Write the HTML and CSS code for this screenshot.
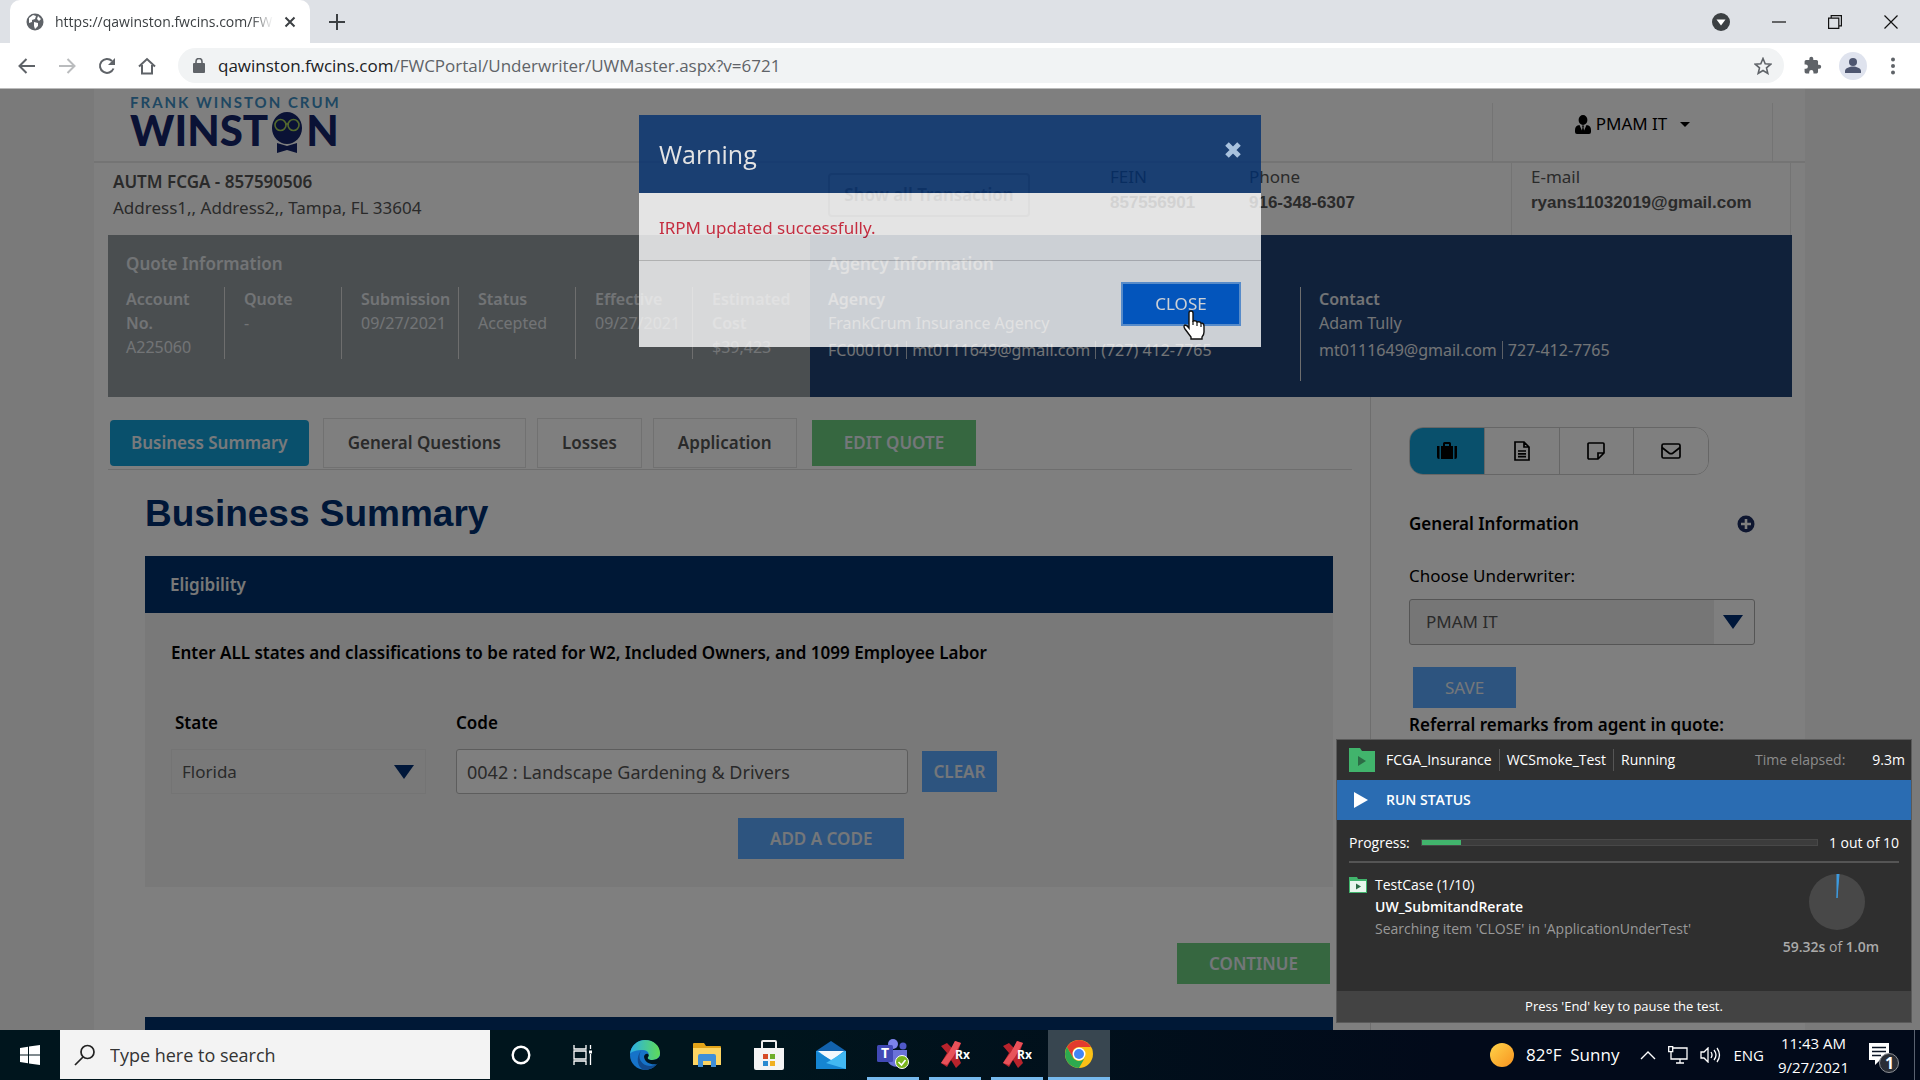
FILE: index.html
```html
<!DOCTYPE html>
<html lang="en">
<head>
<meta charset="utf-8">
<title>Underwriter - Business Summary</title>
<link rel="stylesheet" href="styles.css">
</head>
<body>
<header class="browser">
  <div class="tabstrip">
    <div class="browser-tab">
      <svg width="18" height="18" viewBox="0 0 18 18"><circle cx="9" cy="9" r="8.500" fill="#5f6368"/><path d="M3 5l4-3 3 1-1 3-3 1 0 2-3 1zM8 9l4 1 0 3-3 3-1-3zM12 3l3 3-2 2-2-2z" fill="#fff"/></svg>
      <span class="browser-tab-title">https://qawinston.fwcins.com/FW</span>
      <button class="icon-btn" aria-label="Close tab"><svg width="12" height="12" viewBox="0 0 12 12"><path d="M1.500 1.500l9 9M10.500 1.500l-9 9" stroke="#3c4043" stroke-width="2"/></svg></button>
    </div>
    <button class="icon-btn new-tab" aria-label="New tab"><svg width="16" height="16" viewBox="0 0 16 16"><path d="M8 0v16M0 8h16" stroke="#3c4043" stroke-width="2"/></svg></button>
    <div class="window-controls">
      <svg width="18" height="18" viewBox="0 0 18 18"><circle cx="9" cy="9" r="9" fill="#3c4043"/><path d="M4.500 6.500h9L9 12.500z" fill="#fff"/></svg>
      <svg width="14" height="14" viewBox="0 0 14 14"><path d="M0 7h14" stroke="#111" stroke-width="1.200"/></svg>
      <svg width="14" height="14" viewBox="0 0 14 14"><path d="M.6 3.200h10.200v10.200H.6zM3.200 3V.6h10.200v10.200H11" fill="none" stroke="#111" stroke-width="1.200"/></svg>
      <svg width="14" height="14" viewBox="0 0 14 14"><path d="M.5.5l13 13M13.500.5l-13 13" stroke="#111" stroke-width="1.200"/></svg>
    </div>
  </div>
  <div class="toolbar">
    <button class="icon-btn" aria-label="Back"><svg width="18" height="16" viewBox="0 0 18 16"><path d="M17 8H2M8.500 1L1.500 8l7 7" fill="none" stroke="#5f6368" stroke-width="2"/></svg></button>
    <button class="icon-btn" aria-label="Forward"><svg width="18" height="16" viewBox="0 0 18 16"><path d="M1 8h15M9.500 1l7 7-7 7" fill="none" stroke="#babcbe" stroke-width="2"/></svg></button>
    <button class="icon-btn" aria-label="Reload"><svg width="18" height="18" viewBox="0 0 18 18"><path d="M15.500 11.500A7 7 0 1 1 14 4" fill="none" stroke="#5f6368" stroke-width="2"/><path d="M17 1v7h-7z" fill="#5f6368"/></svg></button>
    <button class="icon-btn" aria-label="Home"><svg width="18" height="18" viewBox="0 0 18 18"><path d="M1 9.500L9 2l8 7.500M4 8v8.500h10V8" fill="none" stroke="#5f6368" stroke-width="2"/></svg></button>
    <div class="address">
      <svg width="12" height="15" viewBox="0 0 12 15"><rect y="5" width="12" height="10" rx="1" fill="#5f6368"/><path d="M3 6V3.500a3 3 0 0 1 6 0V6" fill="none" stroke="#5f6368" stroke-width="1.600"/></svg>
      <span class="url"><b>qawinston.fwcins.com</b>/FWCPortal/Underwriter/UWMaster.aspx?v=6721</span>
      <svg width="18" height="18" viewBox="0 0 18 18"><path d="M9 1.500l2.200 5.200 5.600.5-4.300 3.700 1.300 5.500L9 13.500l-4.800 2.900 1.300-5.500L1.200 7.200l5.600-.5z" fill="none" stroke="#5f6368" stroke-width="1.600"/></svg>
    </div>
    <svg width="19" height="19" viewBox="0 0 24 24"><path fill="#5f6368" d="M20.500 11H19V7a2 2 0 0 0-2-2h-4V3.500a2.500 2.500 0 0 0-5 0V5H4a2 2 0 0 0-2 2v3.800h1.500a2.700 2.700 0 0 1 0 5.400H2V20a2 2 0 0 0 2 2h3.800v-1.500a2.700 2.700 0 0 1 5.400 0V22H17a2 2 0 0 0 2-2v-4h1.500a2.500 2.500 0 0 0 0-5z"/></svg>
    <svg width="28" height="28" viewBox="0 0 28 28"><circle cx="14" cy="14" r="14" fill="#dfe3ee"/><circle cx="14" cy="10" r="4" fill="#4e5670"/><path d="M6 21v-2c0-3 5-4.500 8-4.500s8 1.500 8 4.500v2z" fill="#4e5670"/></svg>
    <svg width="18" height="18" viewBox="0 0 18 18" fill="#5f6368"><circle cx="9" cy="2.500" r="2"/><circle cx="9" cy="9" r="2"/><circle cx="9" cy="15.500" r="2"/></svg>
  </div>
</header>

<main class="viewport">
  <div class="site">
    <div class="site-head">
      <a class="logo" href="#" aria-label="Frank Winston Crum Winston">
        <span class="logo-top">FRANK WINSTON CRUM</span>
        <span class="logo-main"><span>WINST</span><svg width="32" height="42" viewBox="0 0 32 42"><ellipse cx="16" cy="17" rx="15" ry="16" fill="#14256a"/><circle cx="9.500" cy="14" r="5.500" fill="#14256a" stroke="#a6d15a" stroke-width="1.600"/><circle cx="22.500" cy="14" r="5.500" fill="#14256a" stroke="#a6d15a" stroke-width="1.600"/><path d="M14 13h4" stroke="#a6d15a" stroke-width="1.600"/><path d="M6 32l10 3 10-3v10l-10-3-10 3z" fill="#14256a"/></svg><span>N</span></span>
      </a>
      <div class="user-menu">
        <button class="user-btn"><svg width="16" height="19" viewBox="0 0 16 19"><path d="M8 0a4.400 5 0 0 1 0 10A4.400 5 0 0 1 8 0zM4.500 10L8 18l3.500-8c3 .5 4.500 2 4.500 5v2q0 2-2 2H2q-2 0-2-2v-2c0-3 1.500-4.500 4.500-5zM7 10.500h2l-.5 2 .8 4L8 18l-1.300-1.500.8-4z" fill="#000"/></svg>PMAM IT<i class="caret"></i></button>
      </div>
    </div>

    <div class="insured">
      <div class="insured-cell"><strong>AUTM FCGA - 857590506</strong><span>Address1,, Address2,, Tampa, FL 33604</span></div>
      <div><button class="outline-btn">Show all Transaction</button></div>
      <div class="contact-cell"><span>FEIN</span><b>857556901</b></div>
      <div class="contact-cell"><span>Phone</span><b>916-348-6307</b></div>
      <div class="contact-cell email-cell"><span>E-mail</span><b>ryans11032019@gmail.com</b></div>
    </div>

    <div class="band">
      <section class="quote-info">
        <h2>Quote Information</h2>
        <dl class="quote-cells">
          <div><dt>Account No.</dt><dd>A225060</dd></div>
          <div><dt>Quote</dt><dd>-</dd></div>
          <div><dt>Submission</dt><dd>09/27/2021</dd></div>
          <div><dt>Status</dt><dd>Accepted</dd></div>
          <div><dt>Effective</dt><dd>09/27/2021</dd></div>
          <div><dt>Estimated Cost</dt><dd>$39,423</dd></div>
        </dl>
      </section>
      <section class="agency-info">
        <h2>Agency Information</h2>
        <dl class="agency-cells">
          <div><dt>Agency</dt><dd>FrankCrum Insurance Agency</dd><dd class="reach"><span>FC000101</span><span>mt0111649@gmail.com</span><span>(727) 412-7765</span></dd></div>
          <div><dt>Contact</dt><dd>Adam Tully</dd><dd class="reach"><span>mt0111649@gmail.com</span><span>727-412-7765</span></dd></div>
        </dl>
      </section>
    </div>

    <div class="columns">
      <div class="main-col">
        <nav class="tabs">
          <a class="tab active" href="#">Business Summary</a>
          <a class="tab" href="#">General Questions</a>
          <a class="tab" href="#">Losses</a>
          <a class="tab" href="#">Application</a>
          <button class="btn green edit">EDIT QUOTE</button>
        </nav>
        <div class="main-body">
          <h1>Business Summary</h1>
          <h3 class="section-bar">Eligibility</h3>
          <form class="section-body">
            <p class="lead">Enter ALL states and classifications to be rated for W2, Included Owners, and 1099 Employee Labor</p>
            <div class="fields">
              <div class="field"><label for="state">State</label>
                <div class="select-wrap plain"><select id="state"><option>Florida</option></select><i class="arrow"></i></div></div>
              <div class="field"><label for="code">Code</label>
                <input id="code" type="text" value="0042 : Landscape Gardening &amp; Drivers"></div>
              <button class="btn blue clear" type="button">CLEAR</button>
            </div>
            <div class="add-row"><button class="btn blue" type="button">ADD A CODE</button></div>
          </form>
          <div class="continue-row"><button class="btn green">CONTINUE</button></div>
          <div class="section-bar"></div>
        </div>
      </div>
      <aside class="side">
        <div class="side-tabs">
          <button class="on" aria-label="Account"><svg width="20" height="20" viewBox="0 0 20 20"><path d="M0 5h2.500v13H2q-2 0-2-2zM17.500 5H20v11q0 2-2 2h-.5zM4 5h2V2.500Q6 1 7.500 1h5Q14 1 14 2.500V5h2v13H4zM8 3v2h4V3z" fill="#000"/></svg></button>
          <button aria-label="Documents"><svg width="16" height="20" viewBox="0 0 16 20"><path d="M1 1h9l5 5v13H1zM10 1v5h5M4 10h8M4 12.800h8M4 15.600h8" fill="none" stroke="#000" stroke-width="1.700"/></svg></button>
          <button aria-label="Notes"><svg width="18" height="18" viewBox="0 0 18 18"><path d="M2 1h14q1 0 1 1v9l-6 6H2q-1 0-1-1V2q0-1 1-1zM17 11h-6v6" fill="none" stroke="#000" stroke-width="1.700"/></svg></button>
          <button aria-label="Mail"><svg width="20" height="16" viewBox="0 0 20 16"><rect x="1" y="1" width="18" height="14" rx="1.500" fill="none" stroke="#000" stroke-width="1.700"/><path d="M1 4.500l7 5.500q2 1.400 4 0l7-5.500" fill="none" stroke="#000" stroke-width="1.700"/></svg></button>
        </div>
        <div class="side-title"><h4>General Information</h4>
          <svg width="18" height="18" viewBox="0 0 18 18"><circle cx="9" cy="9" r="8.500" fill="#1c2c60"/><path d="M9 4v10M4 9h10" stroke="#fff" stroke-width="2.600"/></svg></div>
        <label class="side-label" for="uw">Choose Underwriter:</label>
        <div class="select-wrap boxed"><select id="uw"><option>PMAM IT</option></select><i class="arrow"></i></div>
        <button class="btn blue save">SAVE</button>
        <h4>Referral remarks from agent in quote:</h4>
      </aside>
    </div>
  </div>

  <div class="backdrop"></div>

  <div class="modal" role="dialog" aria-labelledby="warn">
    <div class="modal-head"><h2 id="warn">Warning</h2>
      <button class="icon-btn" aria-label="Close"><svg width="18" height="18" viewBox="0 0 18 18"><path d="M3 3l12 12M15 3L3 15" stroke="#b4d4f8" stroke-width="5"/></svg></button></div>
    <p class="modal-body">IRPM updated successfully.</p>
    <div class="modal-foot">
      <button class="close-btn">CLOSE</button>
    </div>
  </div>
  <svg class="cursor" width="22" height="30" viewBox="0 0 22 30"><path d="M6 16V3q0-2 2-2t2 2v8q3-1 4 1 3-1 4 1 3 0 3 3v6q0 3-2 5v2H8v-2l-6-8q-2-3 0-4 2 0 4 3z" fill="#fff" stroke="#111" stroke-width="1.400"/><path d="M10 11v4M14 12v4M18 13v4" stroke="#111" stroke-width="1.200"/></svg>
</main>

<section class="runner">
  <div class="runner-head">
    <svg width="26" height="24" viewBox="0 0 26 24"><path d="M0 0h11l2 3h13v21H0z" fill="#41b46c"/><path d="M9 8l8 5-8 5z" fill="#2c6b45"/></svg>
    <span>FCGA_Insurance</span><span>WCSmoke_Test</span><span>Running</span>
    <span class="elapsed">Time elapsed:</span><span>9.3m</span>
  </div>
  <div class="runner-status"><svg width="14" height="16" viewBox="0 0 14 16"><path d="M0 0l14 8-14 8z" fill="#fff"/></svg>RUN STATUS</div>
  <div class="runner-body">
    <div class="runner-progress"><span>Progress:</span><div class="bar"><div class="fill" style="width:10%"></div></div><span>1 out of 10</span></div>
    <div class="runner-case">
      <svg width="18" height="16" viewBox="0 0 18 16"><path d="M0 0h8l1 2h9v14H0z" fill="#41b46c"/><path d="M1 4h16v11H1z" fill="#e8f6ed"/><path d="M7 6.500l5 3-5 3z" fill="#2c6b45"/></svg>
      <div class="case-text"><span>TestCase (1/10)</span><b>UW_SubmitandRerate</b><span class="dim">Searching item 'CLOSE' in 'ApplicationUnderTest'</span></div>
      <div class="case-timer">
        <svg width="56" height="56" viewBox="0 0 56 56"><circle cx="28" cy="28" r="28" fill="#484848"/><path d="M28 24V0h2z" fill="#3d9be0" stroke="#3d9be0"/></svg>
        <span><b>59.32s</b> of <b>1.0m</b></span>
      </div>
    </div>
  </div>
  <div class="runner-foot">Press 'End' key to pause the test.</div>
</section>

<footer class="taskbar">
  <button class="start" aria-label="Start"><svg width="20" height="20" viewBox="0 0 20 20"><path d="M0 3l8-1.200v7.700H0zM9 1.600L20 0v9.500H9zM0 10.500h8v7.700L0 17zM9 10.500h11V20L9 18.400z" fill="#fff"/></svg></button>
  <label class="search"><svg width="22" height="22" viewBox="0 0 22 22"><circle cx="13.500" cy="8" r="6.500" fill="none" stroke="#222" stroke-width="1.700"/><path d="M9 13l-8 8" stroke="#222" stroke-width="1.700"/></svg><input type="text" placeholder="Type here to search" aria-label="Search"></label>
  <div class="apps">
    <div class="app"><svg width="20" height="20" viewBox="0 0 20 20"><circle cx="10" cy="10" r="8.300" fill="none" stroke="#fff" stroke-width="2.400"/></svg></div>
    <div class="app"><svg width="20" height="20" viewBox="0 0 20 20"><path d="M1 0v4h12V0M1 20v-4h12v4M1 6h12v8H1zM17.500 0v4M17.500 9v11" fill="none" stroke="#fff" stroke-width="1.300"/><path d="M16 5.500h3v3h-3z" fill="#fff"/></svg></div>
    <div class="app"><svg width="30" height="30" viewBox="0 0 30 30"><defs><linearGradient id="e1" x1="0" x2="1"><stop offset="0" stop-color="#2aaee8"/><stop offset="1" stop-color="#5fdc57"/></linearGradient></defs><circle cx="15" cy="15" r="15" fill="#1673c9"/><path d="M0 14C1 5 8 0 15 0c9 0 15 6 15 13 0 5-4 7-8 7-3 0-5-1-4-3 2-3 0-7-5-7C7 10 2 11 0 14z" fill="url(#e1)"/><path d="M11 11c-4 6 0 15 9 15 3 0 5-1 7-3-3 5-8 7-12 7C8 29 5 18 11 11z" fill="#124a8e"/><path d="M18 17c-1 2 1 3 4 3 3 0 6-1 8-4 0 5-2 8-3 8-6 1-12-1-13-7 0-2 2-4 4-3 1 1 1 2 0 3z" fill="#00141d"/></svg></div>
    <div class="app"><svg width="28" height="24" viewBox="0 0 28 24"><path d="M0 1q0-1 1-1h10l2 3h14q1 0 1 1v18H0z" fill="#e3a419"/><path d="M0 5h28v17H0z" fill="#fcd462"/><path d="M5 24V13q0-2 2-2h14q2 0 2 2v11h-5v-6h-8v6z" fill="#3f8fd8"/></svg></div>
    <div class="app"><svg width="30" height="30" viewBox="0 0 30 30"><path d="M8 9V2q0-1 1-1h12q1 0 1 1v7" fill="none" stroke="#eee" stroke-width="2"/><path d="M0 8h30v20q0 2-2 2H2q-2 0-2-2z" fill="#f4f4f4"/><path d="M9 14h5v5H9z" fill="#d64b26"/><path d="M16 14h5v5h-5z" fill="#6fae2b"/><path d="M9 21h5v5H9z" fill="#2b8ad0"/><path d="M16 21h5v5h-5z" fill="#f0b020"/></svg></div>
    <div class="app"><svg width="30" height="28" viewBox="0 0 30 28"><path d="M0 10L15 0l15 10z" fill="#1262ad"/><path d="M0 10h30v18H0z" fill="#2ea3e8"/><path d="M2 10h26L15 20z" fill="#f4f8fc"/><path d="M0 10l30 18H0z" fill="#1585d2"/><path d="M30 10L10 22l20 6z" fill="#42b8f2"/></svg></div>
    <div class="app run"><svg width="32" height="30" viewBox="0 0 32 30"><circle cx="16" cy="5" r="5" fill="#7b83eb"/><circle cx="26" cy="7" r="3.500" fill="#5059c9"/><path d="M10 11h20v9q0 8-9 8t-11-8z" fill="#6a72d8"/><rect y="6" width="16" height="17" rx="1.500" fill="#4149b5"/><text x="4" y="19" class="ico-t">T</text><circle cx="25" cy="23" r="6.500" fill="#7ab51d" stroke="#fff"/><path d="M21.500 23l3 3 4-5" fill="none" stroke="#fff" stroke-width="1.600"/></svg></div>
    <div class="app run"><svg width="30" height="28" viewBox="0 0 30 28"><path d="M1 6l6-3 5 5 3-7 6 2-4 11 4 9-5 5-5-8-4 7-6-4 6-10z" fill="#b8232c"/><path d="M15 1l6 2-8 14-6 8-6-2 8-11z" fill="#e8525a"/><text x="15" y="19" class="ico-rx">Rx</text></svg></div>
    <div class="app run"><svg width="30" height="28" viewBox="0 0 30 28"><path d="M1 6l6-3 5 5 3-7 6 2-4 11 4 9-5 5-5-8-4 7-6-4 6-10z" fill="#b8232c"/><path d="M15 1l6 2-8 14-6 8-6-2 8-11z" fill="#e8525a"/><text x="15" y="19" class="ico-rx">Rx</text></svg></div>
    <div class="app run current"><svg width="28" height="28" viewBox="0 0 28 28"><circle cx="14" cy="14" r="14" fill="#fbc116"/><path d="M1.900 7A14 14 0 0 1 26.100 7H14a7 7 0 0 0-6 3.500l-.1 7z" fill="#e33b2e"/><path d="M1.900 7A14 14 0 0 0 14 28l6-10.500a7 7 0 0 1-12.100 0z" fill="#2da94f"/><circle cx="14" cy="14" r="6.500" fill="#fff"/><circle cx="14" cy="14" r="5" fill="#4285f4"/></svg></div>
  </div>
  <div class="tray">
    <svg width="24" height="24" viewBox="0 0 24 24"><defs><linearGradient id="s1" x2="1" y2="1"><stop offset="0" stop-color="#ffd44a"/><stop offset="1" stop-color="#f8931f"/></linearGradient></defs><circle cx="12" cy="12" r="12" fill="url(#s1)"/></svg>
    <span class="weather">82°F&nbsp; Sunny</span>
    <svg width="16" height="10" viewBox="0 0 16 10"><path d="M1 9l7-7 7 7" fill="none" stroke="#fff" stroke-width="1.400"/></svg>
    <svg width="20" height="18" viewBox="0 0 20 18"><path d="M5 2h14v11H3V6M8 17h8M12 13v4M.7.700h4v5h-4z" fill="none" stroke="#fff" stroke-width="1.300"/></svg>
    <svg width="21" height="16" viewBox="0 0 21 16"><path d="M1 5h3l4-4v14l-4-4H1zM11 5q2 3 0 6M14 3q4 5 0 10M17 1q5 7 0 14" fill="none" stroke="#fff" stroke-width="1.300"/></svg>
    <span>ENG</span>
    <span class="clock">11:43 AM<br>9/27/2021</span>
    <svg class="notes" width="30" height="32" viewBox="0 0 30 32"><path d="M0 0h20v17h-9l-5 5v-5H0z" fill="#fff"/><path d="M3 4.500h14M3 8.500h14M3 12.500h9" stroke="#0a1424" stroke-width="1.500"/><circle cx="20" cy="20" r="9.500" fill="#2a2e36" stroke="#8c8f94"/><text x="16" y="26" class="ico-n">1</text></svg>
  </div>
  <div class="show-desktop"></div>
</footer>
</body>
</html>
```
FILE: styles.css
```css
* { box-sizing: border-box; }
body {
  margin: 0;
  height: 100vh;
  display: flex;
  flex-direction: column;
  overflow: hidden;
  position: relative;
  font-family: "Open Sans", "Noto Sans", sans-serif;
  font-size: 16px;
  line-height: 24px;
  color: #555;
}
h1, h2, h3, h4, p, dl, dd { margin: 0; }
button, input, select { font: inherit; color: inherit; }
button { cursor: pointer; }
svg { flex: none; display: block; }
a { text-decoration: none; color: inherit; }
.icon-btn { border: 0; background: none; padding: 0; display: flex; align-items: center; justify-content: center; }

/* browser frame */
.browser { flex: none; background: #dee1e6; color: #3c4043; }
.tabstrip { display: flex; align-items: center; height: 43px; }
.browser-tab {
  width: 300px;
  height: 43px;
  margin-left: 10px;
  padding: 0 14px 0 16px;
  display: flex;
  align-items: center;
  gap: 11px;
  background: #fff;
  border-radius: 10px 10px 0 0;
}
.browser-tab-title {
  flex: 1;
  overflow: hidden;
  white-space: nowrap;
  font-size: 14px;
  -webkit-mask-image: linear-gradient(90deg, #000 90%, transparent);
  mask-image: linear-gradient(90deg, #000 90%, transparent);
}
.new-tab { margin-left: 19px; }
.window-controls { margin-left: auto; margin-right: 22px; display: flex; align-items: center; gap: 42px; }
.toolbar { display: flex; align-items: center; height: 46px; padding: 0 18px; gap: 22px; background: #fff; border-bottom: 1px solid #bbb; }
.toolbar > svg { margin-left: -5px; }
.address {
  flex: 1;
  height: 35px;
  margin-right: 2px;
  padding: 0 12px 0 15px;
  display: flex;
  align-items: center;
  gap: 13px;
  background: #f1f3f4;
  border-radius: 18px;
}
.url { flex: 1; font-size: 17px; color: #5f6368; }
.url b { font-weight: 400; color: #202124; }

/* page */
.viewport { flex: 1; min-height: 0; position: relative; overflow: hidden; background: #f4f4f4; font-family: "Noto Sans", "Open Sans", sans-serif; font-size: 17px; }
.site { margin: 0 115px 0 94px; background: #fff; }
.site-head { display: flex; justify-content: space-between; height: 74px; padding: 4px 32px 0 36px; border-bottom: 2px solid #e8e8e8; }
.logo { display: flex; flex-direction: column; }
.logo-top { font: 700 15px/18px Lato, sans-serif; color: #3f8fc4; letter-spacing: 2px; }
.logo-main { display: flex; align-items: flex-start; gap: 3px; font: 900 42px/38px Lato, sans-serif; color: #14256a; }
.user-menu { width: 281px; margin-top: 10px; display: flex; justify-content: center; align-items: center; border: solid #e8e8e8; border-width: 0 1px; }
.user-btn { display: flex; align-items: center; gap: 5px; border: 0; background: none; color: #000; padding: 0 0 16px; }
.caret { margin-left: 8px; border: 5px solid transparent; border-top-color: #000; border-bottom: 0; }

.insured { display: grid; grid-template-columns: 720fr 282fr 139fr 262fr 280fr; height: 72px; padding: 0 14px; }
.insured-cell { padding: 7px 5px; display: flex; flex-direction: column; gap: 2px; }
.insured-cell strong { font-weight: 600; }
.contact-cell { padding-top: 2px; display: flex; flex-direction: column; gap: 2px; }
.contact-cell b { font-weight: 700; font-family: "Liberation Sans", sans-serif; }
.email-cell { padding-left: 19px; border: solid #e8e8e8; border-width: 0 1px; }
.outline-btn { margin-top: 10px; height: 44px; width: 202px; border: 2px solid #c8c8c8; border-radius: 4px; background: #fff; color: #888; font-weight: 600; padding: 0; }

.band { display: grid; grid-template-columns: 702fr 982fr; height: 162px; margin: 0 13px 0 14px; color: #e4e8ec; font-size: 16px; }
.band h2 { padding: 17px 18px 11px; font-size: 17px; font-weight: 600; line-height: 24px; }
.band dt { font-weight: 600; }
.quote-info { background: #949ca0; }
.agency-info { background: #204274; }
.quote-cells { display: grid; grid-template-columns: repeat(6, 1fr); height: 72px; }
.quote-cells > div { padding-left: 19px; border-right: 1px solid #ddd; }
.quote-cells > div:last-child { border: 0; }
.quote-cells > div:first-child { padding-left: 18px; }
.quote-cells > div:first-child dt { padding-right: 18px; }
.agency-cells { display: grid; grid-template-columns: 1fr 1fr; height: 94px; }
.agency-cells > div { padding-left: 18px; white-space: nowrap; }
.agency-cells > div:first-child { border-right: 1px solid #ddd; }
.reach { display: flex; align-items: center; padding-top: 6px; }
.reach span { line-height: 18px; }
.reach span + span { margin-left: 5px; padding-left: 5px; border-left: 1px solid #b8c0cc; }

.columns { display: grid; grid-template-columns: 1276fr 435fr; min-height: 633px; }
.tabs { display: flex; align-items: center; gap: 11px; height: 73px; margin: 0 18px 0 14px; padding: 20px 0 0 2px; border-bottom: 1px solid #dcdcdc; }
.tab { height: 50px; padding: 0 24px; border: 1px solid #e2e2e2; line-height: 48px; font-weight: 600; }
.tab.active { margin-right: 3px; padding: 0 21px; background: #12a0d8; border: 0; border-radius: 4px; height: 46px; line-height: 46px; color: #f0f4f8; }
.btn { height: 41px; border: 0; padding: 0 32px; color: #e8eef4; font-weight: 600; }
.btn.blue { background: #5aa8ff; }
.btn.green { background: #6ccf80; }
.btn.edit { height: 46px; margin-left: 4px; }
.main-body { padding: 14px 37px 0 51px; }
h1 { font: 700 37px/60px "Liberation Sans", sans-serif; color: #002e70; margin-bottom: 12px; }
.section-bar { height: 57px; padding: 0 25px; background: #00306c; color: #f0f0f0; font-size: 17px; font-weight: 600; line-height: 57px; }
.section-body { height: 274px; padding: 28px 26px 0; background: #f3f3f3; color: #000; }
.lead { font-weight: 600; white-space: nowrap; }
.fields { display: flex; align-items: flex-end; margin-top: 46px; }
.field label { display: block; padding-left: 4px; margin-bottom: 14px; font-weight: 600; }
.field + .field { margin-left: 30px; }
.field + .field label { padding-left: 0; }
.field input { display: block; width: 452px; height: 45px; padding: 0 10px; border: 1px solid #bbb; border-radius: 3px; background: #fff; font-size: 18px; color: #555; }
.select-wrap { position: relative; display: flex; align-items: center; color: #555; }
.select-wrap select { appearance: none; width: 100%; height: 100%; border: 0; background: none; padding: 0 10px; }
.select-wrap .arrow { position: absolute; right: 11px; border: 10px solid transparent; border-top: 14px solid #002e74; border-bottom: 0; pointer-events: none; }
.select-wrap.plain { width: 255px; height: 45px; border: 1px solid #e8e8e8; }
.btn.clear { padding: 0; width: 75px; margin: 0 0 2px 14px; }
.add-row { display: flex; padding: 24px 0 0 567px; }
.continue-row { display: flex; justify-content: flex-end; padding: 56px 3px 33px; }

.side { padding: 30px 50px 0 38px; border-left: 1px solid #dcdcdc; color: #000; white-space: nowrap; }
.side h4 { font-size: 17px; font-weight: 600; line-height: 24px; }
.side-tabs { display: flex; width: 300px; height: 48px; border: 1px solid #ccc; border-radius: 14px; overflow: hidden; }
.side-tabs button { flex: 1; border: 0; border-left: 1px solid #ccc; background: #fff; padding: 0; display: flex; align-items: center; justify-content: center; }
.side-tabs .on { background: #12a0d8; border: 0; }
.side-title { display: flex; justify-content: space-between; align-items: center; padding: 37px 0 28px; }
.side-label { display: block; margin-bottom: 11px; }
.select-wrap.boxed { height: 46px; border: 1px solid #aaa; border-radius: 3px; background: linear-gradient(90deg, #ececec calc(100% - 40px), #fff 0); }
.select-wrap.boxed select { padding: 0 16px; }
.btn.save { display: block; margin: 22px 0 5px 4px; font-weight: 400; }

.backdrop { position: absolute; inset: 0; background: rgba(0, 0, 0, .5); }
.modal { position: absolute; left: 639px; top: 26px; width: 622px; background: #fff; opacity: .79; }
.modal-head { height: 78px; padding: 0 19px 8px 20px; display: flex; align-items: center; justify-content: space-between; background: #002e6f; color: #fff; }
.modal-head h2 { font: 400 25px/34px "Open Sans", sans-serif; padding-top: 8px; }
.modal-body { height: 68px; padding: 23px 20px; color: #d81830; border-bottom: 1px solid #ccc; }
.modal-foot { display: flex; justify-content: flex-end; padding: 21px 20px; }
.close-btn { width: 120px; height: 44px; border: 2px solid #6aa8f0; background: #0064e0; color: #fff; padding: 0; }
.cursor { position: absolute; left: 1183px; top: 221px; }

/* test runner panel */
.runner { position: absolute; right: 8px; bottom: 57px; width: 576px; border: 1px solid #5a5a5a; background: #2f2f2f; color: #fff; font-size: 14px; line-height: 22px; }
.runner-head { display: flex; align-items: center; height: 40px; padding: 0 6px 0 12px; }
.runner-head svg { margin-right: 11px; }
.runner-head span + span { margin-left: 7px; padding-left: 7px; border-left: 1px solid #555; }
.runner-head .elapsed { margin-left: auto; color: #8c8c8c; }
.runner-head .elapsed, .runner-head .elapsed + span { border: 0; }
.runner-head .elapsed + span { padding-left: 20px; }
.runner-status { display: flex; align-items: center; gap: 18px; height: 40px; padding-left: 17px; background: #2a6cb2; font-weight: 600; }
.runner-body { height: 171px; padding: 0 12px; }
.runner-progress { display: flex; align-items: center; gap: 11px; height: 43px; padding-top: 4px; border-bottom: 2px solid #555; }
.bar { flex: 1; height: 7px; border: 1px solid #484848; background: #3c3c3c; }
.fill { height: 100%; background: #41b46c; }
.runner-case { display: flex; padding-top: 11px; gap: 8px; }
.runner-case > svg { margin-top: 3px; }
.case-text { flex: 1; display: flex; flex-direction: column; }
.case-text b { font-weight: 600; }
.dim { color: #999; }
.case-timer { display: flex; flex-direction: column; align-items: center; gap: 6px; margin-right: 20px; color: #aaa; }
.case-timer svg { margin-left: 12px; }
.case-timer b { font-weight: 600; }
.runner-foot { height: 31px; background: #434343; text-align: center; font-size: 13px; line-height: 31px; }

/* taskbar */
.taskbar { flex: none; display: flex; height: 50px; color: #fff; background: linear-gradient(90deg, #00151d 40%, #020a1a 75%); }
.start { width: 60px; border: 0; background: none; display: flex; align-items: center; justify-content: center; padding: 0; }
.search { width: 430px; height: 49px; background: #f3f3f3; display: flex; align-items: center; gap: 14px; padding: 0 14px; }
.search input { flex: 1; border: 0; background: none; padding: 0; font-size: 18px; }
.search input::placeholder { color: #333; opacity: 1; }
.apps { display: flex; }
.app { width: 62px; display: flex; align-items: center; justify-content: center; }
.app.run { border-bottom: 3px solid #76b9ed; width: 52px; margin: 0 5px; }
.app.current { width: 62px; margin: 0; background: #384650; }
.tray { margin-left: auto; display: flex; align-items: center; gap: 12px; font-size: 15px; padding-right: 15px; }
.weather { font-size: 17px; margin-right: 9px; }
.clock { text-align: center; margin: 0 8px 0 2px; }
.notes { margin-top: 8px; }
.show-desktop { width: 6px; border-left: 1px solid #5a6270; }
.ico-t { font: 700 14px "Open Sans", sans-serif; fill: #fff; }
.ico-rx { font: 700 12px "Open Sans", sans-serif; fill: #fff; }
.ico-n { font: 700 16px "Open Sans", sans-serif; fill: #fff; }
```
